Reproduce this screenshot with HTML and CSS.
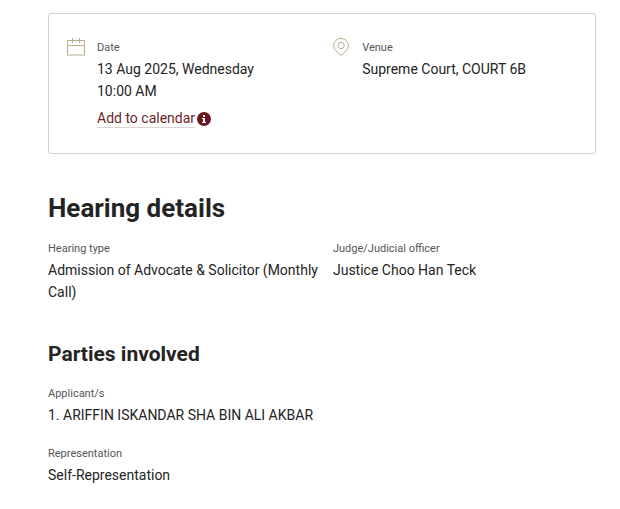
FILE: index.html
```html
<!DOCTYPE html>
<html lang="en">
<head>
<meta charset="utf-8">
<meta name="viewport" content="width=device-width, initial-scale=1">
<title>Hearing details</title>
<link rel="stylesheet" href="styles.css">
</head>
<body>
<main class="page">
  <section class="summary columns">
    <div class="summary-item">
      <svg class="icon" viewBox="0 0 18 18" aria-hidden="true"><path d="M.5 2.500h17v14.500H.5zM.5 7.500h17M5.500 0v5M12.500 0v5"/></svg>
      <div>
        <h3 class="label">Date</h3>
        <p class="value">13 Aug 2025, Wednesday<br>10:00 AM</p>
        <p class="calendar"><a class="link" href="#calendar">Add to calendar</a>
          <svg class="info" viewBox="0 0 14 14" aria-hidden="true"><circle cx="7" cy="7" r="7"/><path d="M6 3h2v2H6zM5 6h3v4h1v1H5v-1h1V7H5z"/></svg>
        </p>
      </div>
    </div>
    <div class="summary-item">
      <svg class="icon" viewBox="0 0 18 18" aria-hidden="true"><path d="M9 17.500L3.600 12.700C-.8 8 2.500.5 9 .5s9.800 7.500 5.400 12.200z"/><circle cx="9" cy="7.500" r="3.200"/></svg>
      <div>
        <h3 class="label">Venue</h3>
        <p class="value">Supreme Court, COURT 6B</p>
      </div>
    </div>
  </section>
  <section class="details">
    <h1 class="title">Hearing details</h1>
    <dl class="columns">
      <div><dt class="label">Hearing type</dt><dd class="value">Admission of Advocate &amp; Solicitor (Monthly Call)</dd></div>
      <div><dt class="label">Judge/Judicial officer</dt><dd class="value">Justice Choo Han Teck</dd></div>
    </dl>
  </section>
  <section class="parties">
    <h2 class="subtitle">Parties involved</h2>
    <dl class="party-list">
      <div><dt class="label">Applicant/s</dt><dd class="value">1. ARIFFIN ISKANDAR SHA BIN ALI AKBAR</dd></div>
      <div><dt class="label">Representation</dt><dd class="value">Self-Representation</dd></div>
    </dl>
  </section>
</main>
</body>
</html>
```
FILE: styles.css
```css
* { box-sizing: border-box; }
body, h1, h2, h3, p, dl, dd { margin: 0; }
body { background: #fff; color: #242424; font-family: Roboto, "Liberation Sans", sans-serif; font-size: 14px; line-height: 22px; }
.page { padding: 13px 24px 24px 48px; }
.columns { display: grid; grid-template-columns: 13fr 12fr; }
.summary { border: 1px solid #d0d0d0; border-radius: 3px; padding: 24px 18px; }
.summary-item { display: flex; gap: 12px; }
.icon { flex: none; width: 18px; height: 18px; fill: none; stroke: #bbad8b; stroke-width: 1; }
.label { color: #555; font-size: 11px; font-weight: 400; line-height: 20px; }
.value { line-height: 22px; }
.calendar { display: flex; align-items: center; gap: 2px; margin-top: 6px; }
.link { color: #6d1f28; text-decoration: none; border-bottom: 1px solid #ddd3d3; line-height: 18px; }
.info { width: 14px; height: 14px; fill: #6d1720; }
.info path { fill: #fff; }
.calendar { min-height: 21px; }
.details { margin-top: 36px; }
.title { font-size: 26px; line-height: 36px; font-weight: 700; }
.details .columns { margin-top: 13px; }
.parties { margin-top: 36px; }
.subtitle { font-size: 21px; line-height: 30px; font-weight: 700; }
.party-list { display: grid; gap: 18px; margin-top: 15px; }
```
